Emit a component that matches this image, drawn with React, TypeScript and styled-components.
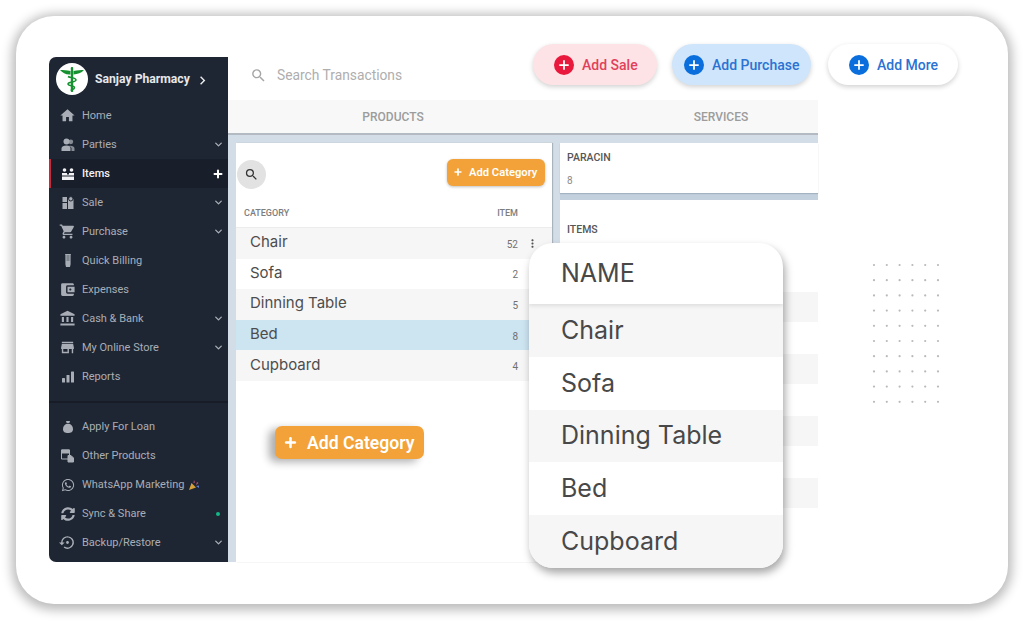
import { ReactNode } from "react";
import styled, { createGlobalStyle } from "styled-components";
import { ChevronDown, Plus } from "lucide-react";
import {
  MdAccountBalance,
  MdAccountBalanceWallet,
  MdChevronRight,
  MdHome,
  MdMoreVert,
  MdSearch,
  MdSettingsBackupRestore,
  MdShoppingCart,
  MdStore,
} from "react-icons/md";
import { FaSyncAlt, FaWhatsapp } from "react-icons/fa";

const GlobalStyle = createGlobalStyle`
  * {
    box-sizing: border-box;
  }

  html, body {
    margin: 0;
    background: #fff;
  }

  body {
    font-family: Roboto, "Liberation Sans", sans-serif;
    width: 1024px;
    height: 621px;
    overflow: hidden;
  }
`;

const Page = styled.div`
  width: 1024px;
  height: 621px;
  padding: 16px;
`;

const Card = styled.div`
  position: relative;
  width: 992px;
  height: 588px;
  padding: 41px 33px;
  background: #fff;
  border-radius: 38px;
  box-shadow: 0 2px 11px 4px rgba(0, 0, 0, 0.27);
`;

const Screen = styled.div`
  display: flex;
  height: 505px;
`;

const Sidebar = styled.aside`
  flex: 0 0 179px;
  background: #1f2633;
  border-radius: 7px 0 0 7px;
  color: #a9aeb6;
  overflow: hidden;
`;

const Brand = styled.div`
  display: flex;
  align-items: center;
  height: 44px;
  padding: 0 0 0 7px;
  color: #e6e8ea;
  font-size: 12.2px;
  font-weight: 700;

  svg.chev {
    margin-left: 4px;
    margin-top: 3px;
    font-size: 17px;
  }
`;

const Logo = styled.div`
  display: flex;
  align-items: center;
  justify-content: center;
  width: 32px;
  height: 32px;
  margin-right: 7px;
  background: #fff;
  border-radius: 50%;
`;

const NavGroup = styled.nav<{ $divided?: boolean }>`
  padding: ${(p) => (p.$divided ? "9px 0 0" : "0 0 10px")};
  border-top: ${(p) => (p.$divided ? "2px solid #171c26" : "none")};
`;

const NavRow = styled.div<{ $active?: boolean }>`
  display: flex;
  align-items: center;
  height: 29px;
  padding: 0 3px 0 ${(p) => (p.$active ? "9px" : "11px")};
  font-size: 11px;
  font-weight: ${(p) => (p.$active ? 500 : 400)};
  color: ${(p) => (p.$active ? "#f1f2f4" : "#a9aeb6")};
  background: ${(p) => (p.$active ? "#191f2a" : "transparent")};
  border-left: ${(p) => (p.$active ? "2px solid #c62a3e" : "none")};
`;

const NavIcon = styled.span`
  display: flex;
  align-items: center;
  justify-content: center;
  flex: 0 0 15px;
  margin-right: 7px;
  font-size: 17px;

  svg {
    flex: none;
    margin: 0 -2px;
  }
`;

const NavLabel = styled.span`
  display: flex;
  align-items: center;
  gap: 4px;
  flex: 1;
  white-space: nowrap;
`;

const NavTrail = styled.span`
  display: flex;
  align-items: center;
  justify-content: center;
  width: 14px;
`;

const OnlineDot = styled.i`
  width: 4px;
  height: 4px;
  background: #12b886;
  border-radius: 50%;
`;

const Main = styled.main`
  display: flex;
  flex: 1;
  flex-direction: column;
`;

const TopBar = styled.header`
  display: flex;
  align-items: flex-start;
  height: 43px;
  padding-left: 22px;
`;

const SearchBox = styled.div`
  display: flex;
  align-items: center;
  gap: 10px;
  width: 283px;
  height: 20px;
  margin-top: 8px;
  color: #aeaeae;
  font-size: 13.8px;

  svg {
    font-size: 17px;
    color: #a5a5a5;
  }
`;

const Actions = styled.div`
  display: flex;
  align-items: center;
  margin-top: -13px;
`;

const ActionButton = styled.button<{
  $bg: string;
  $fg: string;
  $w: number;
  $mr: number;
  $pad: number;
}>`
  display: flex;
  align-items: center;
  gap: 8px;
  width: ${(p) => p.$w}px;
  height: 41px;
  margin-right: ${(p) => p.$mr}px;
  padding: 0 0 0 ${(p) => p.$pad}px;
  border: none;
  border-radius: 21px;
  background: ${(p) => p.$bg};
  color: ${(p) => p.$fg};
  font: 500 14px Roboto, sans-serif;
  box-shadow: 0 2px 5px rgba(0, 0, 0, 0.18);
`;

const PlusDisc = styled.span<{ $bg: string }>`
  display: flex;
  align-items: center;
  justify-content: center;
  width: 20px;
  height: 20px;
  background: ${(p) => p.$bg};
  border-radius: 50%;
  color: #fff;
`;

const Tabs = styled.div`
  display: grid;
  grid-template-columns: 330px 326px;
  width: 590px;
  height: 35px;
  padding-top: 1px;
  overflow: hidden;
  background: #f8f8f8;
  border-bottom: 2px solid #b3bac1;
`;

const Tab = styled.div`
  display: flex;
  align-items: center;
  justify-content: center;
  color: #9c9c9c;
  font-size: 12px;
  font-weight: 500;
`;

const Body = styled.div`
  position: relative;
  display: flex;
  flex: 1;
  gap: 8px;
  width: 590px;
  padding: 8px 0 0 8px;
  background: #d3dde7;
`;

const CategoryPanel = styled.section`
  position: relative;
  flex: 0 0 316px;
  background: #fff;
  box-shadow: 1px 0 1px rgba(90, 100, 115, 0.35);
`;

const PanelTools = styled.div`
  display: flex;
  align-items: center;
  justify-content: space-between;
  height: 60px;
  padding: 2px 7px 0 1px;
`;

const RoundSearch = styled.span`
  display: flex;
  align-items: center;
  justify-content: center;
  width: 29px;
  height: 29px;
  background: #e2e2e2;
  border-radius: 50%;
  color: #333;
  font-size: 15px;
`;

const OrangeButton = styled.button<{ $big?: boolean }>`
  display: flex;
  align-items: center;
  gap: ${(p) => (p.$big ? "9px" : "6px")};
  width: ${(p) => (p.$big ? "149px" : "98px")};
  height: ${(p) => (p.$big ? "33px" : "27px")};
  margin-top: ${(p) => (p.$big ? "0" : "-4px")};
  padding: 0 0 0 ${(p) => (p.$big ? "8px" : "6px")};
  border: none;
  border-radius: ${(p) => (p.$big ? "7px" : "6px")};
  background: #f2a238;
  color: #fff;
  font: ${(p) => (p.$big ? "600 17.6px" : "600 11.2px")} Roboto, sans-serif;
  white-space: nowrap;
  box-shadow: ${(p) =>
    p.$big ? "-6px 3px 9px rgba(0, 0, 0, 0.32)" : "0 1px 3px rgba(0, 0, 0, 0.25)"};

  svg {
    flex: none;
  }
`;

const FloatingAdd = styled.div`
  position: absolute;
  top: 283px;
  left: 39px;
`;

const ColumnHead = styled.div`
  display: flex;
  justify-content: space-between;
  height: 25px;
  padding: 5px 34px 0 8px;
  border-bottom: 1px solid #ececec;
  color: #7d7d7d;
  font-size: 9px;
  font-weight: 500;
`;

const CategoryRow = styled.div<{ $tone: "plain" | "alt" | "selected" }>`
  display: flex;
  align-items: center;
  height: 30.6px;
  padding-left: 14px;
  background: ${(p) =>
    p.$tone === "selected" ? "#cde4f1" : p.$tone === "alt" ? "#f6f6f6" : "#fff"};
  color: #4d4d4d;
  font-family: Inter, "Liberation Sans", sans-serif;
  font-size: 15px;
`;

const RowName = styled.span`
  flex: 1;
  margin-bottom: 3px;
`;

const RowCount = styled.span`
  margin-top: 2px;
  color: #717171;
  font-family: Roboto, sans-serif;
  font-size: 10px;
`;

const KebabSlot = styled.span`
  display: flex;
  flex: 0 0 34px;
  padding-left: 8px;
  color: #555;
  font-size: 13px;
`;

const RightColumn = styled.section`
  display: flex;
  flex: 1;
  flex-direction: column;
  gap: 7px;
  background: #c3d1df;
`;

const ParacinCard = styled.div`
  height: 50px;
  padding: 8px 7px;
  background: #fff;
  box-shadow: 0 1px 1px rgba(90, 110, 130, 0.3);
`;

const SmallTitle = styled.div`
  color: #565656;
  font-size: 10.5px;
  font-weight: 500;
`;

const SmallValue = styled.div`
  margin-top: 11px;
  color: #8a8a8a;
  font-size: 10px;
`;

const ItemsCard = styled.div`
  flex: 1;
  padding: 23px 7px 0;
  background: #fff;
`;

const StripeList = styled.div`
  display: flex;
  flex-direction: column;
  gap: 32px;
  margin: 56px -7px 0;
`;

const Stripe = styled.div`
  height: 30px;
  background: #f6f6f6;
`;

const NamePopover = styled.div`
  position: absolute;
  top: 227px;
  left: 513px;
  display: flex;
  flex-direction: column;
  width: 254px;
  height: 325px;
  overflow: hidden;
  background: #fff;
  border-radius: 24px;
  box-shadow: 2px 5px 9px rgba(0, 0, 0, 0.35);
  color: #484848;
  font-family: Inter, "Liberation Sans", sans-serif;
  font-size: 25px;
`;

const PopoverHead = styled.div`
  display: flex;
  align-items: center;
  flex: 0 0 61px;
  padding: 0 0 2px 32px;
  box-shadow: 0 2px 4px rgba(0, 0, 0, 0.1);
  z-index: 1;
`;

const PopoverRow = styled.div<{ $alt: boolean }>`
  display: flex;
  align-items: center;
  flex: 1;
  padding: 0 0 1px 32px;
  background: ${(p) => (p.$alt ? "#f6f6f6" : "#fff")};
`;

const DotField = styled.svg`
  position: absolute;
  top: 247px;
  left: 856px;
`;

const Caduceus = () => (
  <svg width="26" height="28" viewBox="0 0 26 28" fill="#15912f">
    <path d="M13 2c.8 0 1.2.6 1.2 1.2V26c0 .6-.5 1-1.2 1s-1.2-.4-1.2-1V3.200C11.800 2.600 12.200 2 13 2z" />
    <path d="M1 5c3 0 7 .2 10.500 1v3.500C7.500 10 3.500 8 1 5zM25 5c-3 0-7 .2-10.500 1v3.500c4-.5 8-1.500 10.500-4.500z" />
    <path
      d="M9 11.500c2.500 1.500 8 1 8 3.500s-8 1.500-8 4 6.500 1 6.500 3.500-3.500 1.500-3.500 3"
      fill="none"
      stroke="#15912f"
      strokeWidth="1.5"
    />
  </svg>
);

const PartiesIcon = () => (
  <svg width="14" height="14" viewBox="0 0 14 14" fill="currentColor">
    <circle cx="9.800" cy="3.800" r="2.400" opacity=".75" />
    <path d="M8 8c2.800-.5 5.500.5 5.500 2.500V13H10.500v-2.500C10.500 9.500 9.500 8.500 8 8z" opacity=".75" />
    <circle cx="5.500" cy="3.500" r="3" />
    <path d="M.5 13v-2.500C.5 8.500 2.500 7.500 5.500 7.500s4 1 4 3V13z" />
  </svg>
);

const ItemsIcon = () => (
  <svg width="14" height="14" viewBox="0 0 14 14" fill="currentColor">
    <circle cx="3.500" cy="3" r="1.800" />
    <circle cx="10.500" cy="3" r="1.800" />
    <path d="M1 6h5v1.500h2V6h5v2.500H1zM1 9.500h12V13H1z" />
  </svg>
);

const SaleIcon = () => (
  <svg width="14" height="14" viewBox="0 0 14 14" fill="currentColor">
    <path d="M1.500 1H6v5H1.500zM7 3h5.500v10H7zM1.500 7H6v6H1.500z" />
    <circle cx="9.800" cy="2.800" r="2.200" stroke="#1f2633" />
  </svg>
);

const BillingIcon = () => (
  <svg width="14" height="15" viewBox="0 0 14 15" fill="currentColor">
    <path d="M4 1h6l-.4 1.200v9L9 14H5l-.6-2.800v-9z" />
    <path d="M5.500 3h3M5.500 5h3M5.500 7h3" stroke="#1f2633" strokeWidth=".6" />
  </svg>
);

const ReportsIcon = () => (
  <svg width="14" height="14" viewBox="0 0 14 14" fill="currentColor">
    <rect x="1" y="8" width="3" height="4.500" rx=".5" />
    <rect x="5.500" y="5" width="3" height="7.500" rx=".5" />
    <rect x="10" y="1.500" width="3" height="11" rx=".5" />
  </svg>
);

const LoanIcon = () => (
  <svg width="14" height="14" viewBox="0 0 14 14" fill="currentColor">
    <path d="M5 1h4l-.7 2.200h-2.600zM5 4h4c1.800 1 3 2.800 3 5 0 3-2 4-5 4s-5-1-5-4c0-2.200 1.200-4 3-5z" />
  </svg>
);

const ProductsIcon = () => (
  <svg width="15" height="15" viewBox="0 0 15 15" fill="none" stroke="currentColor">
    <path d="M1.500 2h8v9h-8z" />
    <path d="M1.500 2h8v3h-8z" fill="currentColor" />
    <path d="M8 7.500h3l2.500 2.500v4H8z" fill="currentColor" />
  </svg>
);

const PartyIcon = () => (
  <svg width="12" height="12" viewBox="0 0 12 12">
    <path d="M1 11l2.500-7 4.500 4.500z" fill="#d8a23a" />
    <path d="M6 1l1 2.500L5.500 4zM9 3l1.500 1L8 6z" fill="#c4527a" />
    <path d="M8 7l3-.5V9z" fill="#5c7fd0" />
  </svg>
);

type NavEntry = {
  label: ReactNode;
  icon: ReactNode;
  trail?: "more" | "plus" | "dot";
  active?: boolean;
};

const mainNav: NavEntry[] = [
  { label: "Home", icon: <MdHome /> },
  { label: "Parties", icon: <PartiesIcon />, trail: "more" },
  { label: "Items", icon: <ItemsIcon />, trail: "plus", active: true },
  { label: "Sale", icon: <SaleIcon />, trail: "more" },
  { label: "Purchase", icon: <MdShoppingCart />, trail: "more" },
  { label: "Quick Billing", icon: <BillingIcon /> },
  { label: "Expenses", icon: <MdAccountBalanceWallet /> },
  { label: "Cash & Bank", icon: <MdAccountBalance />, trail: "more" },
  { label: "My Online Store", icon: <MdStore />, trail: "more" },
  { label: "Reports", icon: <ReportsIcon /> },
];

const otherNav: NavEntry[] = [
  { label: "Apply For Loan", icon: <LoanIcon /> },
  { label: "Other Products", icon: <ProductsIcon /> },
  {
    label: (
      <>
        WhatsApp Marketing <PartyIcon />
      </>
    ),
    icon: <FaWhatsapp size={14} />,
  },
  { label: "Sync & Share", icon: <FaSyncAlt size={14} />, trail: "dot" },
  { label: "Backup/Restore", icon: <MdSettingsBackupRestore />, trail: "more" },
];

const categories = [
  { name: "Chair", count: 52 },
  { name: "Sofa", count: 2 },
  { name: "Dinning Table", count: 5 },
  { name: "Bed", count: 8 },
  { name: "Cupboard", count: 4 },
];

function renderNav(entry: NavEntry, index: number) {
  return (
    <NavRow key={index} $active={entry.active}>
      <NavIcon>{entry.icon}</NavIcon>
      <NavLabel>{entry.label}</NavLabel>
      <NavTrail>
        {entry.trail === "more" && <ChevronDown size={11} strokeWidth={3} />}
        {entry.trail === "plus" && <Plus size={12} strokeWidth={4} color="#fff" />}
        {entry.trail === "dot" && <OnlineDot />}
      </NavTrail>
    </NavRow>
  );
}

function App() {
  return (
    <>
      <GlobalStyle />
      <Page>
        <Card>
          <Screen>
            <Sidebar>
              <Brand>
                <Logo>
                  <Caduceus />
                </Logo>
                Sanjay Pharmacy
                <MdChevronRight className="chev" />
              </Brand>
              <NavGroup>{mainNav.map(renderNav)}</NavGroup>
              <NavGroup $divided>{otherNav.map(renderNav)}</NavGroup>
            </Sidebar>
            <Main>
              <TopBar>
                <SearchBox>
                  <MdSearch />
                  Search Transactions
                </SearchBox>
                <Actions>
                  <ActionButton $bg="#fde3e6" $fg="#e2405a" $w={124} $mr={15} $pad={21}>
                    <PlusDisc $bg="#e8193c">
                      <Plus size={14} strokeWidth={3} />
                    </PlusDisc>
                    Add Sale
                  </ActionButton>
                  <ActionButton $bg="#cfe5fb" $fg="#2b72d2" $w={139} $mr={17} $pad={12}>
                    <PlusDisc $bg="#0a6fdc">
                      <Plus size={14} strokeWidth={3} />
                    </PlusDisc>
                    Add Purchase
                  </ActionButton>
                  <ActionButton $bg="#fff" $fg="#2b72d2" $w={130} $mr={0} $pad={21}>
                    <PlusDisc $bg="#0a6fdc">
                      <Plus size={14} strokeWidth={3} />
                    </PlusDisc>
                    Add More
                  </ActionButton>
                </Actions>
              </TopBar>
              <Tabs>
                <Tab>PRODUCTS</Tab>
                <Tab>SERVICES</Tab>
              </Tabs>
              <Body>
                <CategoryPanel>
                  <PanelTools>
                    <RoundSearch>
                      <MdSearch />
                    </RoundSearch>
                    <OrangeButton>
                      <Plus size={10} strokeWidth={4} />
                      Add Category
                    </OrangeButton>
                  </PanelTools>
                  <ColumnHead>
                    <span>CATEGORY</span>
                    <span>ITEM</span>
                  </ColumnHead>
                  {categories.map((c, i) => (
                    <CategoryRow
                      key={c.name}
                      $tone={c.name === "Bed" ? "selected" : i % 2 === 0 ? "alt" : "plain"}
                    >
                      <RowName>{c.name}</RowName>
                      <RowCount>{c.count}</RowCount>
                      <KebabSlot>{i === 0 && <MdMoreVert />}</KebabSlot>
                    </CategoryRow>
                  ))}
                  <FloatingAdd>
                    <OrangeButton $big>
                      <Plus size={15} strokeWidth={4} />
                      Add Category
                    </OrangeButton>
                  </FloatingAdd>
                </CategoryPanel>
                <RightColumn>
                  <ParacinCard>
                    <SmallTitle>PARACIN</SmallTitle>
                    <SmallValue>8</SmallValue>
                  </ParacinCard>
                  <ItemsCard>
                    <SmallTitle>ITEMS</SmallTitle>
                    <StripeList>
                      {[0, 1, 2, 3].map((n) => (
                        <Stripe key={n} />
                      ))}
                    </StripeList>
                  </ItemsCard>
                </RightColumn>
              </Body>
            </Main>
          </Screen>
          <NamePopover>
            <PopoverHead>NAME</PopoverHead>
            {categories.map((c, i) => (
              <PopoverRow key={c.name} $alt={i % 2 === 0}>
                {c.name}
              </PopoverRow>
            ))}
          </NamePopover>
          <DotField width="70" height="145" viewBox="0 0 70 145">
            {Array.from({ length: 60 }, (_, n) => (
              <circle
                key={n}
                cx={2 + (n % 6) * 12.8}
                cy={2 + Math.floor(n / 6) * 15.2}
                r="1.100"
                fill="#b9b9b9"
              />
            ))}
          </DotField>
        </Card>
      </Page>
    </>
  );
}

export default App;
